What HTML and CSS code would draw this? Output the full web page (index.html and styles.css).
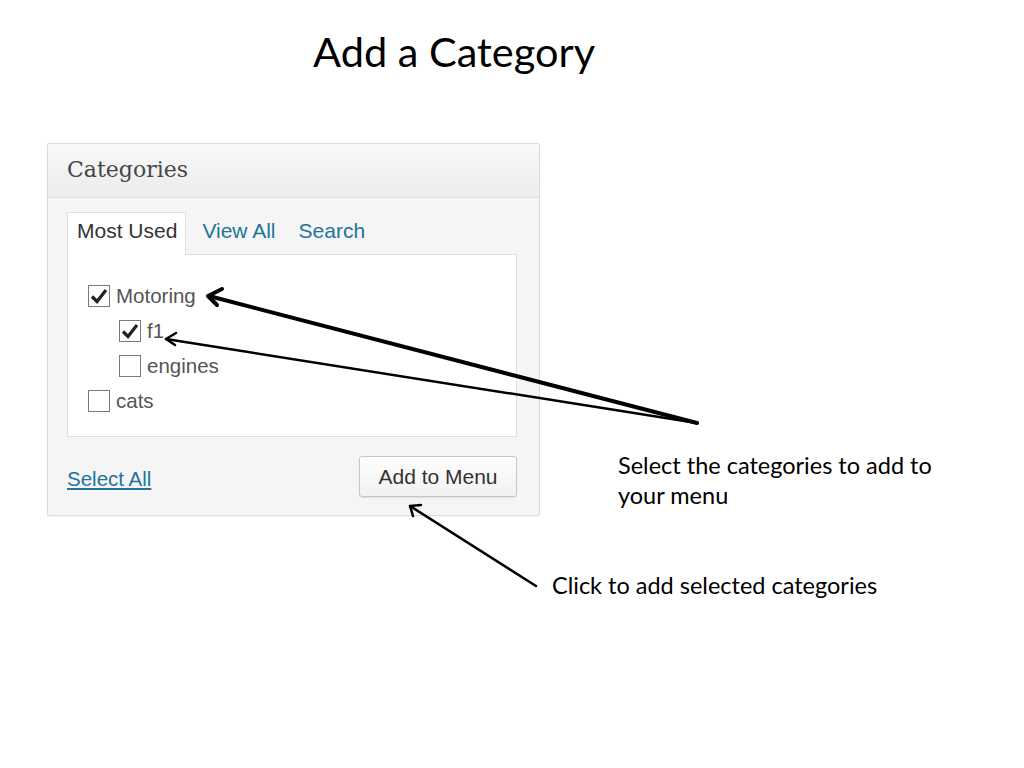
FILE: index.html
```html
<!DOCTYPE html>
<html lang="en">
<head>
  <meta charset="UTF-8">
  <title>Add a Category</title>
  <link rel="stylesheet" href="styles.css">
</head>
<body>
  <div class="slide">
    <h1 class="title">Add a Category</h1>

    <!-- Categories meta box -->
    <div class="panel">
      <div class="panel-head">Categories</div>
      <div class="panel-body">
        <div class="tabs">
          <span class="tab active">Most Used</span>
          <a class="tab" href="#">View All</a>
          <a class="tab" href="#">Search</a>
        </div>
        <ul class="cat-list">
          <li class="cat"><span class="box checked"><svg viewBox="0 0 20 20"><path d="M3 10.5 L8 15.5 L17 4"/></svg></span>Motoring</li>
          <li class="cat child"><span class="box checked"><svg viewBox="0 0 20 20"><path d="M3 10.5 L8 15.5 L17 4"/></svg></span>f1</li>
          <li class="cat child"><span class="box"></span>engines</li>
          <li class="cat"><span class="box"></span>cats</li>
        </ul>
        <div class="panel-foot">
          <a class="select-all" href="#">Select All</a>
          <button class="add-btn">Add to Menu</button>
        </div>
      </div>
    </div>

    <!-- Callouts -->
    <p class="note note-select">Select the categories to add to<br>your menu</p>
    <p class="note note-click">Click to add selected categories</p>

    <svg class="arrows" width="1024" height="768" viewBox="0 0 1024 768">
      <g fill="none" stroke="#000" stroke-linecap="round" stroke-linejoin="round">
        <path d="M697 423 L209 296" stroke-width="4"/>
        <path d="M222 289 L208 296 L217 305" stroke-width="4"/>
        <path d="M697 423 L166 339" stroke-width="2.5"/>
        <path d="M176 333 L166 339 L175 345" stroke-width="2.5"/>
        <path d="M536 586 L410 506" stroke-width="2.5"/>
        <path d="M421 505 L410 506 L413 516" stroke-width="2.5"/>
      </g>
    </svg>
  </div>
</body>
</html>
```

FILE: styles.css
```css
body, h1, p, ul, li {
  margin: 0;
  padding: 0;
}

*, *::before, *::after {
  box-sizing: border-box;
}

body {
  background-color: #fff;
  font-family: "Liberation Sans", Arial, sans-serif;
}

.slide {
  position: relative;
  width: 1024px;
  height: 768px;
  overflow: hidden;
}

.title {
  font-family: Lato, "Open Sans", sans-serif;
  font-weight: normal;
  font-size: 41.5px;
  line-height: 48px;
  color: #000;
  padding: 27px 0 0 313px;
}

/* Meta box */
.panel {
  margin: 68px 0 0 47px;
  width: 493px;
  border: 1px solid #dcdcdc;
  border-radius: 2px;
  background-color: #f5f5f5;
  box-shadow: 0 1px 2px rgba(0, 0, 0, 0.06);
}

.panel-head {
  height: 54px;
  display: flex;
  align-items: center;
  padding: 0 0 2px 19px;
  font-family: "DejaVu Serif", Georgia, serif;
  font-size: 22px;
  color: #464646;
  background: linear-gradient(#f8f8f8, #ececec);
  border-bottom: 1px solid #e2e2e2;
}

.panel-body {
  padding: 13px 22px 18px 19px;
}

.tabs {
  display: flex;
  align-items: flex-end;
  height: 43px;
  font-size: 21px;
}

.tab {
  padding: 0 9px 11px 9px;
  color: #21759b;
  text-decoration: none;
  margin-right: 5px;
}

.tab.active {
  color: #333;
  background-color: #fff;
  border: 1px solid #dfdfdf;
  border-bottom: none;
  height: 43px;
  padding: 6px 8px 0 9px;
  margin-right: 7px;
  position: relative;
  top: 1px;
}

.cat-list {
  list-style: none;
  background-color: #fff;
  border: 1px solid #dfdfdf;
  height: 183px;
  padding: 23px 0 0 20px;
}

.cat {
  display: flex;
  align-items: center;
  height: 35px;
  font-size: 20.5px;
  color: #555;
}

.cat.child {
  padding-left: 31px;
}

.box {
  width: 22px;
  height: 22px;
  border: 1px solid #7a7a7a;
  background-color: #fff;
  margin-right: 6px;
  display: inline-flex;
}

.box svg {
  width: 20px;
  height: 20px;
}

.box path {
  fill: none;
  stroke: #222;
  stroke-width: 3.2;
}

.panel-foot {
  display: flex;
  justify-content: space-between;
  align-items: center;
  margin-top: 19px;
}

.select-all {
  font-size: 20.5px;
  color: #21759b;
  text-decoration: underline;
  margin-top: 4px;
}

.add-btn {
  font-family: "Liberation Sans", Arial, sans-serif;
  font-size: 21px;
  color: #333;
  width: 158px;
  height: 41px;
  border: 1px solid #c6c6c6;
  border-radius: 3px;
  background: linear-gradient(#fefefe, #f1f1f1);
  box-shadow: 0 1px 1px rgba(0, 0, 0, 0.08);
}

/* Slide callouts */
.note {
  position: absolute;
  font-family: Lato, "Open Sans", sans-serif;
  font-size: 23.5px;
  line-height: 30px;
  color: #000;
}

.note-select {
  left: 618px;
  top: 450px;
}

.note-click {
  left: 552px;
  top: 570px;
}

.arrows {
  position: absolute;
  left: 0;
  top: 0;
  pointer-events: none;
}
```
